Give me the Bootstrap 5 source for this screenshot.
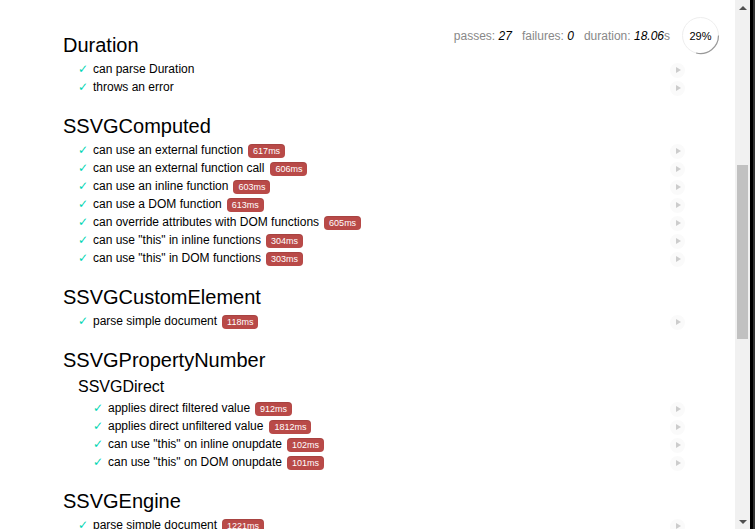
<!DOCTYPE html>
<html lang="en">
<head>
<meta charset="utf-8">
<title>Mocha</title>
<link href="https://cdn.jsdelivr.net/npm/bootstrap@5.3.0/dist/css/bootstrap.min.css" rel="stylesheet">
<style>
html,body{height:100%;margin:0;overflow:hidden;background:#000}
body{font-family:"Liberation Sans",Arial,sans-serif;color:#000}
.shell{height:529px;width:755px}
.pagearea{width:735px;height:529px;background:#fff;overflow:hidden;position:relative}
.report{padding:33px 50px 0 63px;list-style:none;margin:0}
.suite-name{font-size:20px;font-weight:400;line-height:24px;margin:0 0 3px;color:#000}
.sub-name{font-size:16px;font-weight:400;line-height:19px;margin:0 0 3px;padding-top:2px;color:#000}
.suite-block{margin-bottom:18px}
.nested{padding-left:15px}
.tests{list-style:none;margin:0;padding:0 0 0 15px}
.testrow{height:18px;font-size:12px;line-height:18px;display:flex;align-items:center;white-space:nowrap}
.tick{color:#00d6b2;width:15px;flex:none;font-family:"DejaVu Sans",sans-serif;font-size:12px;font-weight:700}
.dur{display:inline-block;background:#b94a48;color:#fff;font-size:9px;line-height:12px;border-radius:4px;padding:1px 5px;margin-left:5px;box-shadow:inset 0 1px 1px rgba(0,0,0,.1)}
.dur-wide{margin-left:6px}
.replay{margin-left:auto;width:15px;height:15px;border-radius:50%;background:#fafafa;display:flex;align-items:center;justify-content:center;flex:none;margin-top:2px}
.replay i{display:block;width:0;height:0;border-left:5px solid #ccc;border-top:3px solid transparent;border-bottom:3px solid transparent;margin-left:1px}
.stats-box{position:absolute;top:15px;right:15px;display:flex;align-items:flex-start;font-size:12px;color:#888}
.stats-box span{margin-left:10px;margin-top:14px;line-height:14px}
.stats-box em{color:#000}
.gauge{width:40px;height:40px;margin-left:10px;flex:none;position:relative;color:#000;text-align:center;font-size:11px;line-height:43px;padding-left:1px}
.gauge svg{position:absolute;left:0;top:0}
.sbar{width:15px;height:529px;background:#f1f1f1;position:relative}
.thumb{position:absolute;left:2px;right:2px;top:165px;height:174px;background:#c1c1c1}
.arrow{position:absolute;left:4px;width:0;height:0;border-left:4px solid transparent;border-right:4px solid transparent}
.arrow-up{top:6px;border-bottom:4px solid #505050}
.arrow-down{bottom:5px;border-top:4px solid #505050}
.edge-strip{width:2px;height:529px;margin-left:3px;background:#333}
</style>
</head>
<body>
<div class="shell d-flex">
  <div class="pagearea">
    <div class="report">
      <section class="suite-block">
        <h1 class="suite-name">Duration</h1>
        <ul class="tests">
          <li class="testrow"><span class="tick">✓</span><span>can parse Duration</span><a class="replay"><i></i></a></li>
          <li class="testrow"><span class="tick">✓</span><span>throws an error</span><a class="replay"><i></i></a></li>
        </ul>
      </section>
      <section class="suite-block">
        <h1 class="suite-name">SSVGComputed</h1>
        <ul class="tests">
          <li class="testrow"><span class="tick">✓</span><span>can use an external function<span class="dur">617ms</span></span><a class="replay"><i></i></a></li>
          <li class="testrow"><span class="tick">✓</span><span>can use an external function call<span class="dur dur-wide">606ms</span></span><a class="replay"><i></i></a></li>
          <li class="testrow"><span class="tick">✓</span><span>can use an inline function<span class="dur">603ms</span></span><a class="replay"><i></i></a></li>
          <li class="testrow"><span class="tick">✓</span><span>can use a DOM function<span class="dur">613ms</span></span><a class="replay"><i></i></a></li>
          <li class="testrow"><span class="tick">✓</span><span>can override attributes with DOM functions<span class="dur">605ms</span></span><a class="replay"><i></i></a></li>
          <li class="testrow"><span class="tick">✓</span><span>can use "this" in inline functions<span class="dur">304ms</span></span><a class="replay"><i></i></a></li>
          <li class="testrow"><span class="tick">✓</span><span>can use "this" in DOM functions<span class="dur">303ms</span></span><a class="replay"><i></i></a></li>
        </ul>
      </section>
      <section class="suite-block">
        <h1 class="suite-name">SSVGCustomElement</h1>
        <ul class="tests">
          <li class="testrow"><span class="tick">✓</span><span>parse simple document<span class="dur">118ms</span></span><a class="replay"><i></i></a></li>
        </ul>
      </section>
      <section class="suite-block">
        <h1 class="suite-name">SSVGPropertyNumber</h1>
        <div class="nested">
          <h2 class="sub-name">SSVGDirect</h2>
          <ul class="tests">
            <li class="testrow"><span class="tick">✓</span><span>applies direct filtered value<span class="dur">912ms</span></span><a class="replay"><i></i></a></li>
            <li class="testrow"><span class="tick">✓</span><span>applies direct unfiltered value<span class="dur dur-wide">1812ms</span></span><a class="replay"><i></i></a></li>
            <li class="testrow"><span class="tick">✓</span><span>can use "this" on inline onupdate<span class="dur">102ms</span></span><a class="replay"><i></i></a></li>
            <li class="testrow"><span class="tick">✓</span><span>can use "this" on DOM onupdate<span class="dur">101ms</span></span><a class="replay"><i></i></a></li>
          </ul>
        </div>
      </section>
      <section class="suite-block">
        <h1 class="suite-name">SSVGEngine</h1>
        <ul class="tests">
          <li class="testrow"><span class="tick">✓</span><span>parse simple document<span class="dur">1221ms</span></span><a class="replay"><i></i></a></li>
        </ul>
      </section>
    </div>
    <div class="stats-box">
      <span>passes: <em>27</em></span>
      <span>failures: <em>0</em></span>
      <span>duration: <em>18.06</em>s</span>
      <div class="gauge">
        <svg width="40" height="40" viewBox="0 0 40 40"><circle cx="20.5" cy="20.5" r="18" fill="none" stroke="#eee" stroke-width="1"/><path d="M38.5 20.5A18 18 0 0 1 16.15 37.97" fill="none" stroke="#999" stroke-width="1.2"/></svg>
        29%
      </div>
    </div>
  </div>
  <div class="sbar">
    <div class="arrow arrow-up"></div>
    <div class="thumb"></div>
    <div class="arrow arrow-down"></div>
  </div>
  <div class="edge-strip"></div>
</div>
</body>
</html>
